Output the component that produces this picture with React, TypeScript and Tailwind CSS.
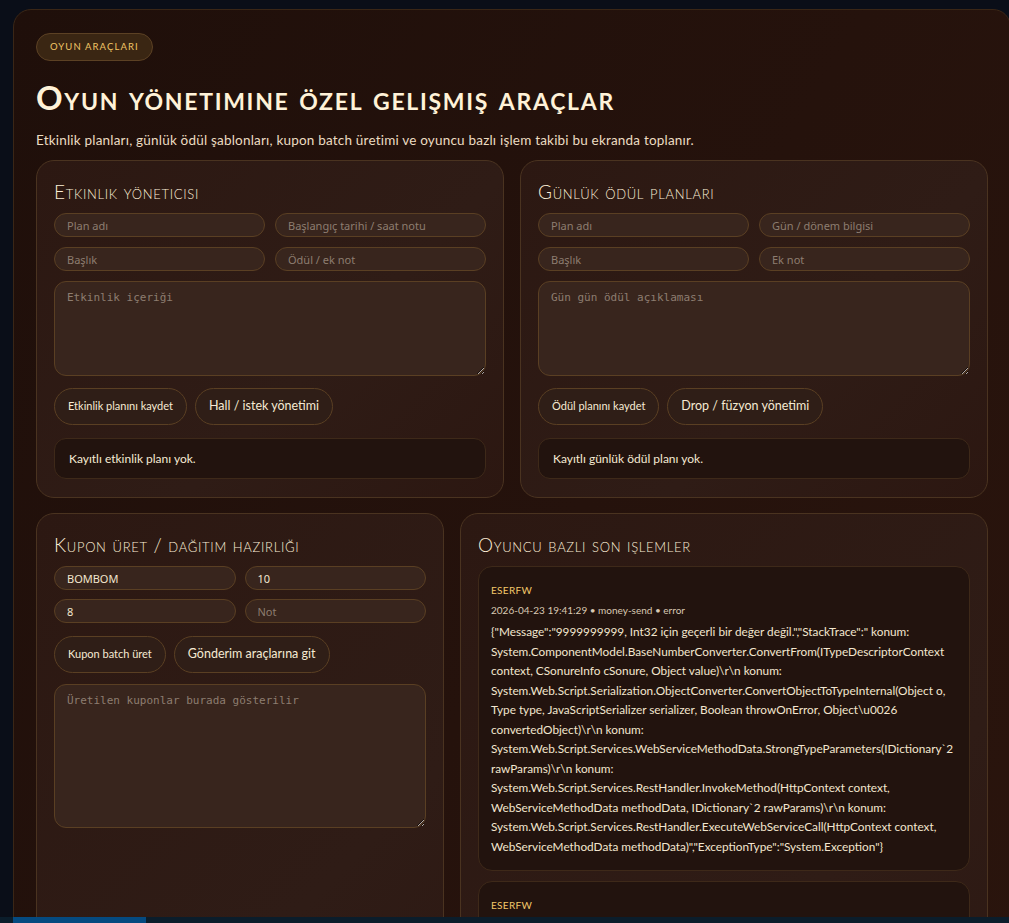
import React from "react";

const head = "font-['Lato','Open_Sans',sans-serif] [font-variant:small-caps]";
const body = "font-['Lato','Noto_Sans',sans-serif]";

const inputCls =
  "h-[24px] w-full rounded-full border border-[#5a3f23] bg-[#38251d] px-3 text-[11px] text-[#f3e6cf] placeholder:text-[#8d7d70] outline-none font-['Noto_Sans',sans-serif]";

const areaCls =
  "w-full rounded-[12px] border border-[#5a3f23] bg-[#38251d] px-3 py-2 text-[11px] text-[#f3e6cf] placeholder:text-[#8d7d70] outline-none font-['DejaVu_Sans_Mono',monospace]";

const btnCls =
  "h-[37px] rounded-full border border-[#5a3f23] bg-[#2f1e17] px-[13px] text-[#f6ead3] " + body;

function Card({ title, children }: { title: string; children: React.ReactNode }) {
  return (
    <div className="min-w-0 rounded-[18px] border border-[#4a3320] bg-[linear-gradient(135deg,#2c1812,#2f1c16_60%,#2c1711)] px-[17px] pb-[18px] pt-[19px]">
      <h2 className={head + " mb-[9px] text-[19px] font-light leading-[24px] tracking-[0.7px] text-[#fbeed6]"}>{title}</h2>
      {children}
    </div>
  );
}

function Empty({ text }: { text: string }) {
  return (
    <div className={"mt-[13px] flex h-[41px] items-center rounded-[12px] border border-[#3e2919] bg-[#22130e] px-[14px] text-[12px] text-[#f6ead3] " + body}>
      {text}
    </div>
  );
}

const logMsg =
  '{"Message":"9999999999, Int32 için geçerli bir değer değil.","StackTrace":" konum: System.ComponentModel.BaseNumberConverter.ConvertFrom(ITypeDescriptorContext context, CSonureInfo cSonure, Object value)\\r\\n konum: System.Web.Script.Serialization.ObjectConverter.ConvertObjectToTypeInternal(Object o, Type type, JavaScriptSerializer serializer, Boolean throwOnError, Object\\u0026 convertedObject)\\r\\n konum: System.Web.Script.Services.WebServiceMethodData.StrongTypeParameters(IDictionary`2 rawParams)\\r\\n konum: System.Web.Script.Services.RestHandler.InvokeMethod(HttpContext context, WebServiceMethodData methodData, IDictionary`2 rawParams)\\r\\n konum: System.Web.Script.Services.RestHandler.ExecuteWebServiceCall(HttpContext context, WebServiceMethodData methodData)","ExceptionType":"System.Exception"}';

function LogItem({ user, meta, msg }: { user: string; meta: string; msg: string }) {
  return (
    <div className={"rounded-[14px] border border-[#3e2919] bg-[#22130e] px-[12px] pb-[14px] pt-[16px] " + body}>
      <div className="text-[10px] leading-[14px] tracking-[0.3px] text-[#f2c86a]">{user}</div>
      <div className="mt-[6px] text-[10px] leading-[14px] text-[#d8c8b2]">{meta}</div>
      <div className="mt-[5px] break-words text-[11.8px] leading-[19.5px] text-[#f3e6cf]">{msg}</div>
    </div>
  );
}

export default function App() {
  return (
    <div className="relative min-h-screen w-full overflow-hidden bg-[#0a0e18]">
      <div className="ml-[13px] mt-[9px] w-[998px] rounded-[18px] border border-[#3a2616] bg-[linear-gradient(120deg,#1f0f0a,#25120c_50%,#2b150d)] px-[22px] pb-[40px] pt-[22px]">
        <span className={"inline-flex h-[28px] items-center rounded-full border border-[#5c4124] bg-[#3a2613] px-[13px] text-[9.5px] uppercase tracking-[1.1px] text-[#f0c565] " + body}>
          Oyun araçları
        </span>
        <h1 className={head + " mt-[17px] text-[33px] font-bold leading-[38px] tracking-[1.7px] text-[#fff2d8]"}>
          Oyun yönetimine özel gelişmiş araçlar
        </h1>
        <p className={"mt-[15px] text-[13.5px] leading-[18px] tracking-[0.2px] text-[#ecdcc2] " + body}>
          Etkinlik planları, günlük ödül şablonları, kupon batch üretimi ve oyuncu bazlı işlem takibi bu ekranda toplanır.
        </p>

        <div className="mt-[11px] grid grid-cols-2 gap-[16px]">
          <Card title="Etkinlik yöneticisi">
            <div className="grid grid-cols-2 gap-[10px]">
              <input className={inputCls} placeholder="Plan adı" />
              <input className={inputCls} placeholder="Başlangıç tarihi / saat notu" />
              <input className={inputCls} placeholder="Başlık" />
              <input className={inputCls} placeholder="Ödül / ek not" />
            </div>
            <textarea className={areaCls + " mt-[10px] block h-[95px]"} placeholder="Etkinlik içeriği" />
            <div className="mt-[12px] flex gap-[8px]">
              <button className={btnCls + " text-[11px]"}>Etkinlik planını kaydet</button>
              <button className={btnCls + " text-[12.5px]"}>Hall / istek yönetimi</button>
            </div>
            <Empty text="Kayıtlı etkinlik planı yok." />
          </Card>

          <Card title="Günlük ödül planları">
            <div className="grid grid-cols-2 gap-[10px]">
              <input className={inputCls} placeholder="Plan adı" />
              <input className={inputCls} placeholder="Gün / dönem bilgisi" />
              <input className={inputCls} placeholder="Başlık" />
              <input className={inputCls} placeholder="Ek not" />
            </div>
            <textarea className={areaCls + " mt-[10px] block h-[95px]"} placeholder="Gün gün ödül açıklaması" />
            <div className="mt-[12px] flex gap-[8px]">
              <button className={btnCls + " text-[11px]"}>Ödül planını kaydet</button>
              <button className={btnCls + " text-[12.5px]"}>Drop / füzyon yönetimi</button>
            </div>
            <Empty text="Kayıtlı günlük ödül planı yok." />
          </Card>
        </div>

        <div className="mt-[15px] grid grid-cols-[408px_1fr] gap-[16px]">
          <Card title="Kupon üret / dağıtım hazırlığı">
            <div className="grid grid-cols-2 gap-[9px]">
              <input className={inputCls} defaultValue="BOMBOM" />
              <input className={inputCls} defaultValue="10" />
              <input className={inputCls} defaultValue="8" />
              <input className={inputCls} placeholder="Not" />
            </div>
            <div className="mt-[13px] flex gap-[8px]">
              <button className={btnCls + " text-[11px]"}>Kupon batch üret</button>
              <button className={btnCls + " text-[12.5px]"}>Gönderim araçlarına git</button>
            </div>
            <textarea className={areaCls + " mt-[11px] block h-[144px]"} placeholder="Üretilen kuponlar burada gösterilir" />
          </Card>

          <Card title="Oyuncu bazlı son işlemler">
            <div className="flex flex-col gap-[10px]">
              <LogItem user="ESERFW" meta="2026-04-23 19:41:29 • money-send • error" msg={logMsg} />
              <LogItem user="ESERFW" meta="2026-04-23 19:40:12 • money-send • error" msg={logMsg} />
            </div>
          </Card>
        </div>
      </div>

      <div className="fixed bottom-0 left-0 right-0 flex h-[6px] bg-[#0b1d2b]">
        <div className="ml-[13px] w-[133px] bg-[#054a80]" />
      </div>
    </div>
  );
}
